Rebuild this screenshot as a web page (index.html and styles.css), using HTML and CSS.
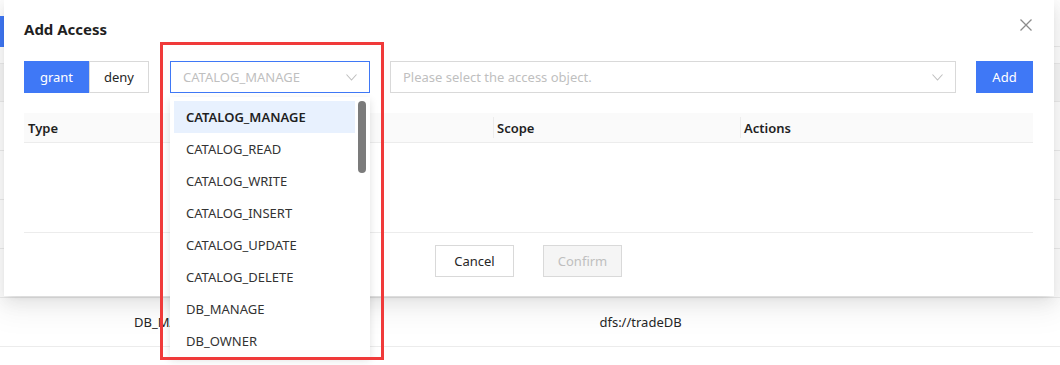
FILE: index.html
```html
<!DOCTYPE html>
<html lang="en">
<head>
    <meta charset="UTF-8">
    <meta name="viewport" content="width=device-width, initial-scale=1.0">
    <title>Add Access</title>
    <link rel="stylesheet" href="styles.css">
</head>
<body>
    <!-- Page behind the dialog -->
    <div class="page">
        <div class="page-toolbar">
            <button class="page-add">Add</button>
        </div>
        <div class="page-table">
            <div class="page-head"></div>
            <div class="page-row"></div>
            <div class="page-row"></div>
            <div class="page-row"></div>
            <div class="page-row"></div>
            <div class="page-row">
                <span class="page-cell cell-access">DB_MANAGE</span>
                <span class="page-cell cell-scope">dfs://tradeDB</span>
            </div>
        </div>
    </div>

    <!-- Dialog -->
    <div class="modal">
        <div class="modal-header">
            <span class="modal-title">Add Access</span>
            <button class="modal-close" aria-label="Close">
                <svg width="12" height="12" viewBox="0 0 12 12">
                    <path d="M0.5 0.5 L11.5 11.5 M11.5 0.5 L0.5 11.5" stroke="#8c8c8c" stroke-width="1.3" fill="none"/>
                </svg>
            </button>
        </div>

        <div class="modal-toolbar">
            <div class="seg">
                <button class="seg-btn active">grant</button>
                <button class="seg-btn">deny</button>
            </div>
            <div class="select select-focus">
                <span class="select-text">CATALOG_MANAGE</span>
                <svg class="select-arrow" width="11" height="7" viewBox="0 0 11 7">
                    <path d="M0.5 0.5 L5.5 6 L10.5 0.5" stroke="#bfbfbf" stroke-width="1.1" fill="none"/>
                </svg>
            </div>
            <div class="select select-wide">
                <span class="select-text">Please select the access object.</span>
                <svg class="select-arrow" width="11" height="7" viewBox="0 0 11 7">
                    <path d="M0.5 0.5 L5.5 6 L10.5 0.5" stroke="#bfbfbf" stroke-width="1.1" fill="none"/>
                </svg>
            </div>
            <button class="btn-primary">Add</button>
        </div>

        <div class="acl-table">
            <div class="acl-head">
                <div class="th th-type">Type</div>
                <div class="th th-access"></div>
                <div class="th th-scope">Scope</div>
                <div class="th th-actions">Actions</div>
            </div>
            <div class="acl-body"></div>
        </div>

        <div class="modal-footer">
            <button class="btn">Cancel</button>
            <button class="btn btn-disabled" disabled>Confirm</button>
        </div>
    </div>

    <!-- Open select menu -->
    <div class="dropdown">
        <ul class="dropdown-list">
            <li class="selected">CATALOG_MANAGE</li>
            <li>CATALOG_READ</li>
            <li>CATALOG_WRITE</li>
            <li>CATALOG_INSERT</li>
            <li>CATALOG_UPDATE</li>
            <li>CATALOG_DELETE</li>
            <li>DB_MANAGE</li>
            <li>DB_OWNER</li>
        </ul>
        <div class="dropdown-scroll">
            <div class="dropdown-thumb"></div>
        </div>
    </div>

    <!-- Highlight frame -->
    <div class="highlight"></div>
</body>
</html>
```

FILE: styles.css
```css
/* Reset */
* {
    margin: 0;
    padding: 0;
    box-sizing: border-box;
}

body {
    width: 1060px;
    height: 365px;
    overflow: hidden;
    position: relative;
    font-family: "Noto Sans", "Open Sans", sans-serif;
    font-size: 13px;
    color: #262626;
    background-color: #fff;
}

button {
    font-family: inherit;
    font-size: 13px;
    cursor: pointer;
}

/* Page behind */
.page-toolbar {
    height: 47px;
    margin-bottom: 16px;
    padding-top: 16px;
    border-bottom: 1px solid #ececec;
}

.page-add {
    height: 31px;
    width: 60px;
    margin-left: -43px;
    padding-left: 12px;
    text-align: left;
    background-color: #3f78f6;
    color: #fff;
    border: none;
}

.page-head {
    height: 39px;
    background-color: #f7f7f7;
    border-top: 1px solid #ececec;
    border-bottom: 1px solid #ececec;
}

.page-row {
    height: 49px;
    border-bottom: 1px solid #ececec;
    display: flex;
    align-items: center;
}

.page-cell {
    color: #262626;
}

.cell-access {
    margin-left: 134px;
}

.cell-scope {
    margin-left: 387px;
}

/* Dialog */
.modal {
    position: absolute;
    left: 4px;
    top: 0;
    width: 1050px;
    height: 296px;
    padding: 0 21px 0 20px;
    background-color: #fff;
    box-shadow: 0 6px 16px 0 rgba(0, 0, 0, 0.08), 0 3px 6px -4px rgba(0, 0, 0, 0.12), 0 9px 28px 8px rgba(0, 0, 0, 0.05);
}

.modal-header {
    height: 58px;
    display: flex;
    align-items: center;
    justify-content: space-between;
}

.modal-title {
    font-size: 15px;
    font-weight: 700;
    color: #1f1f1f;
}

.modal-close {
    border: none;
    background: none;
    width: 12px;
    height: 12px;
    margin-right: 1px;
    margin-top: -8px;
    display: flex;
}

.modal-toolbar {
    margin-top: 3px;
    height: 32px;
    display: flex;
}

.seg {
    display: flex;
    width: 125px;
}

.seg-btn {
    height: 32px;
    width: 60px;
    border: 1px solid #d9d9d9;
    background-color: #fff;
    color: #262626;
}

.seg-btn.active {
    width: 65px;
    background-color: #3f78f6;
    border-color: #3f78f6;
    color: #fff;
}

.select {
    height: 32px;
    display: flex;
    align-items: center;
    justify-content: space-between;
    padding: 0 12px;
    border: 1px solid #d9d9d9;
    color: #bfbfbf;
}

.select-focus {
    width: 200px;
    margin-left: 21px;
    border-color: #3f78f6;
}

.select-wide {
    width: 566px;
    margin-left: 20px;
}

.btn-primary {
    width: 57px;
    height: 32px;
    margin-left: 20px;
    border: none;
    background-color: #3f78f6;
    color: #fff;
}

/* Table inside dialog */
.acl-table {
    margin-top: 20px;
    border-bottom: 1px solid #ececec;
}

.acl-head {
    height: 30px;
    display: flex;
    background-color: #fafafa;
    border-bottom: 1px solid #ececec;
}

.th {
    position: relative;
    display: flex;
    align-items: center;
    padding-left: 4px;
    font-weight: 600;
    color: #1f1f1f;
}

.th + .th::before {
    content: "";
    position: absolute;
    left: 0;
    top: 4px;
    bottom: 4px;
    width: 1px;
    background-color: #ececec;
}

.th-type {
    width: 234px;
}

.th-access {
    width: 235px;
}

.th-scope {
    width: 247px;
}

.th-actions {
    flex: 1;
}

.acl-body {
    height: 89px;
}

.modal-footer {
    display: flex;
    justify-content: center;
    gap: 29px;
    padding-top: 12px;
}

.btn {
    width: 79px;
    height: 32px;
    border: 1px solid #d9d9d9;
    background-color: #fff;
    color: #262626;
}

.btn-disabled {
    background-color: #f5f5f5;
    color: #bfbfbf;
    cursor: not-allowed;
}

/* Select menu */
.dropdown {
    position: absolute;
    left: 170px;
    top: 97px;
    width: 200px;
    height: 260px;
    overflow: hidden;
    display: flex;
    background-color: #fff;
    box-shadow: 0 3px 8px rgba(0, 0, 0, 0.12);
}

.dropdown-list {
    flex: 1;
    list-style: none;
    padding: 4px 0 0 4px;
}

.dropdown-list li {
    height: 32px;
    display: flex;
    align-items: center;
    padding-left: 12px;
    padding-bottom: 1px;
    color: #333;
}

.dropdown-list li.selected {
    background-color: #e8f1fe;
    font-weight: 600;
    color: #1f1f1f;
}

.dropdown-scroll {
    width: 15px;
    padding: 4px 3px 0 3px;
}

.dropdown-thumb {
    width: 8px;
    height: 72px;
    border-radius: 4px;
    background-color: #7b7b7b;
}

/* Red frame */
.highlight {
    position: absolute;
    left: 160px;
    top: 42px;
    width: 224px;
    height: 318px;
    border: 3px solid #f03a3a;
}
```
